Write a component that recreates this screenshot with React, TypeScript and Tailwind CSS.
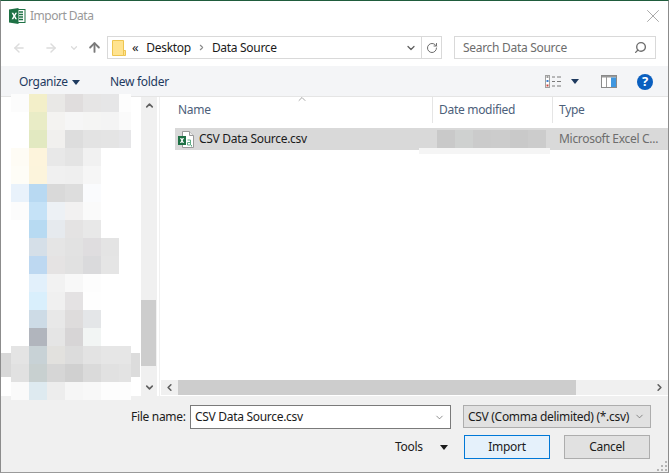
import { ChevronDown, ChevronLeft, ChevronRight, ChevronUp, RotateCw, Search, X, ArrowLeft, ArrowRight, ArrowUp } from "lucide-react";

// blurred navigation tree: one row of cells per 18px band
const treeRows: string[][] = [
  ["bg-[#fcfcfc]", "bg-[#f3efc9]", "bg-[#e9e8e6]", "bg-[#e0dddd]", "bg-[#e6e5e5]", "bg-[#e6e6e7]", "bg-[#fdfdfd]"],
  ["bg-white", "bg-[#e9ecc6]", "bg-[#f4f3f1]", "bg-[#f6f6f6]", "bg-[#f5f5f4]", "bg-[#f4f4f4]", "bg-[#fafafa]"],
  ["bg-white", "bg-[#e2e9c1]", "bg-[#f1f0ee]", "bg-[#dddddd]", "bg-[#e3e3e3]", "bg-[#e4e4e4]", "bg-[#e6e6e8]"],
  ["bg-[#fefcf5]", "bg-[#fdf4dc]", "bg-[#e8e8e8]", "bg-[#e4e4e4]", "bg-[#f1f1f1]", "bg-white", "bg-white"],
  ["bg-[#fefdf7]", "bg-[#fcf4dc]", "bg-[#f0f0f0]", "bg-[#efefef]", "bg-[#f6f6f6]", "bg-white", "bg-white"],
  ["bg-[#e9f2fb]", "bg-[#b8d9f2]", "bg-[#d9d9d9]", "bg-[#dddddd]", "bg-[#fafbfd]", "bg-white", "bg-white"],
  ["bg-[#fcfcfc]", "bg-[#c5e2f7]", "bg-[#edf1f5]", "bg-[#f2f1f1]", "bg-[#fafafa]", "bg-white", "bg-white"],
  ["bg-white", "bg-[#b7daf2]", "bg-[#e6eaee]", "bg-[#e4e3e3]", "bg-[#e8e8e8]", "bg-white", "bg-white"],
  ["bg-white", "bg-[#d5dfe8]", "bg-[#e5e5e5]", "bg-[#e2e2e2]", "bg-[#dfdddf]", "bg-[#e4e4e4]", "bg-white"],
  ["bg-white", "bg-[#bdd8f1]", "bg-[#e5e3e3]", "bg-[#e1e1e1]", "bg-[#dadadc]", "bg-[#e5e5e5]", "bg-white"],
  ["bg-white", "bg-[#e2f0fb]", "bg-[#f2f2f2]", "bg-[#f8f8f8]", "bg-[#fdfdfd]", "bg-white", "bg-white"],
  ["bg-white", "bg-[#d9effc]", "bg-[#f0f0f0]", "bg-[#e4e2e3]", "bg-[#fefefe]", "bg-white", "bg-white"],
  ["bg-white", "bg-[#cddbe6]", "bg-[#e8e8e8]", "bg-[#dedcdc]", "bg-[#e4e6e8]", "bg-white", "bg-white"],
  ["bg-white", "bg-[#b1b5bd]", "bg-[#e5e5e5]", "bg-[#d7d5d6]", "bg-[#f2f5f4]", "bg-white", "bg-white"],
  ["bg-[#e4e4e4]", "bg-[#c8d2d6]", "bg-[#e2e1de]", "bg-[#dcdcdc]", "bg-[#e3e3e3]", "bg-[#e6e6e6]", "bg-[#e6e6e6]"],
  ["bg-[#e1e1e1]", "bg-[#c8d0d0]", "bg-[#d6d6d6]", "bg-[#d0d0d0]", "bg-[#dadada]", "bg-[#e1e1e1]", "bg-[#e3e3e3]"],
  ["bg-[#fafafa]", "bg-[#deeaf0]", "bg-[#ededed]", "bg-[#f6f6f6]", "bg-[#f8f8f8]", "bg-[#fdfdfd]", "bg-[#fdfdfd]"],
];

const dateCells = ["bg-[#c9c9c9]", "bg-[#cfd1d0]", "bg-[#cbcbcb]", "bg-[#cccccc]", "bg-[#c9c9c9]", "bg-[#cccccc]"];

function ExcelLogo() {
  return (
    <svg width="17" height="16" viewBox="0 0 17 16" className="shrink-0">
      <rect x="5" y="1.5" width="11" height="13" fill="#fff" stroke="#1e7145" />
      <path d="M10 4h4M10 6.5h4M10 9h4M10 11.5h4" stroke="#1e7145" strokeWidth="1.4" />
      <path d="M0 1.5 9.5 0v16L0 14.5z" fill="#1e7145" />
      <path d="M2.6 4.8h1.7l1 2 1-2H8L6.2 8 8 11.2H6.3l-1-2-1 2H2.6L4.4 8z" fill="#fff" />
    </svg>
  );
}

function FolderIcon() {
  return (
    <svg width="14" height="16" viewBox="0 0 14 16" className="shrink-0">
      <path d="M.5.5h11v15H.5z" fill="#ffe38f" stroke="#eec550" />
      <path d="M11.5 10.5h2v5h-2z" fill="#ffe38f" stroke="#eec550" />
    </svg>
  );
}

function CsvIcon() {
  return (
    <svg width="16" height="17" viewBox="0 0 16 17" className="shrink-0">
      <path d="M4.5.5h7l4 4v12h-11z" fill="#fff" stroke="#9a9a9a" />
      <path d="M11.5.5v4h4" fill="#eee" stroke="#9a9a9a" />
      <rect x="0" y="5" width="8" height="9" fill="#1e7145" />
      <path d="M2 7h1.3l.7 1.3L4.7 7H6L4.7 9.5 6 12H4.7L4 10.7 3.3 12H2l1.3-2.5z" fill="#fff" />
      <path d="M9.5 9h3v5h-3v-2.5h3M13.5 14v1.5" fill="none" stroke="#5fae86" />
    </svg>
  );
}

function ViewIcon() {
  return (
    <svg width="17" height="13" viewBox="0 0 17 13">
      <rect x="0.5" y="0.5" width="4" height="12" fill="#fff" stroke="#a0a0a0" />
      <path d="M1.5 2h2" stroke="#3c3c3c" />
      <path d="M1.5 6h2" stroke="#3a7fd0" strokeWidth="2" />
      <path d="M1.5 10.5h2" stroke="#c8443c" strokeWidth="2" />
      <path d="M7 2h3M12 2h4M7 6.5h3M12 6.5h4M7 11h3M12 11h4" stroke="#7a7a7a" />
    </svg>
  );
}

function PaneIcon() {
  return (
    <svg width="16" height="13" viewBox="0 0 16 13">
      <rect x="0.5" y="0.5" width="15" height="12" fill="#fff" stroke="#8a8a8a" />
      <rect x="1" y="1" width="14" height="1.5" fill="#9a9a9a" />
      <rect x="5" y="1" width="1" height="11" fill="#9a9a9a" />
      <rect x="10" y="2.5" width="5" height="9.5" fill="#3f97e0" />
    </svg>
  );
}

function Caret({ className }: { className: string }) {
  return (
    <svg width="8" height="5" viewBox="0 0 8 5" className={className}>
      <path d="M0 0h8L4 5z" fill="currentColor" />
    </svg>
  );
}

function ResizeGrip() {
  return (
    <svg width="10" height="10" viewBox="0 0 10 10" className="absolute bottom-[1px] right-[1px]">
      <path d="M8 0h2v2H8zM4 4h2v2H4zM8 4h2v2H8zM0 8h2v2H0zM4 8h2v2H4zM8 8h2v2H8z" fill="#b5b5b5" />
    </svg>
  );
}

export default function App() {
  return (
    <div
      className="relative flex h-[473px] w-[669px] flex-col overflow-hidden border-x border-b border-t border-x-[#8c8c8c] border-b-[#9a9a9a] border-t-[#1f5c3c] bg-white text-[12px] tracking-[-0.3px] text-[#1b1b1b]"
      style={{ fontFamily: '"Noto Sans", "Open Sans", sans-serif' }}
    >
      {/* title bar */}
      <div className="flex h-[29px] shrink-0 items-center pl-[8px] pr-[4px]">
        <ExcelLogo />
        <span className="ml-[4px] mt-[1px] text-[12px] tracking-[-0.5px] text-[#999999]">Import Data</span>
        <X className="ml-auto size-[22px] text-[#8a8a8a]" strokeWidth={0.8} />
      </div>

      {/* address bar */}
      <div className="flex h-[36px] shrink-0 items-center pb-[1px] pl-[11px]">
        <ArrowLeft className="size-[14px] text-[#dcdcdc]" strokeWidth={2.5} />
        <ArrowRight className="ml-[18px] size-[14px] text-[#dcdcdc]" strokeWidth={2.5} />
        <ChevronDown className="ml-[11px] size-[10px] text-[#dcdcdc]" strokeWidth={3} />
        <ArrowUp className="ml-[8px] size-[15px] text-[#7a7a7a]" strokeWidth={3} />
        <div className="ml-[5px] flex h-[23px] w-[335px] items-center border border-[#d9d9d9] pl-[4px]">
          <FolderIcon />
          <span className="ml-[6px] text-[13px] leading-none">«</span>
          <span className="ml-[8px]">Desktop</span>
          <ChevronRight className="ml-[6px] size-[9px] text-[#8a8a8a]" strokeWidth={3} />
          <span className="ml-[6px]">Data Source</span>
          <ChevronDown className="ml-auto mr-[4px] size-[12px] text-[#5f5f5f]" strokeWidth={2.5} />
          <div className="flex h-full w-[20px] items-center justify-center border-l border-[#d9d9d9]">
            <RotateCw className="size-[12px] text-[#6d6d6d]" strokeWidth={2} />
          </div>
        </div>
        <div className="ml-[12px] flex h-[23px] w-[202px] items-center justify-between border border-[#d9d9d9] pl-[8px] pr-[8px] text-[#6d6d6d]">
          <span>Search Data Source</span>
          <Search className="size-[13px] -scale-x-100 text-[#6d6d6d]" strokeWidth={2.5} />
        </div>
      </div>

      {/* toolbar */}
      <div className="flex h-[31px] shrink-0 items-center border-b border-[#e5e5e5] bg-[#f4f5f7] pl-[18px] pt-[1px] text-[#1e3a5f]">
        <span className="w-[48px]">Organize</span>
        <Caret className="ml-[5px] mt-[1px] text-[#1e3a5f]" />
        <span className="ml-[30px]">New folder</span>
        <div className="ml-auto flex items-center pr-[15px]">
          <ViewIcon />
          <Caret className="ml-[9px] text-[#1e3a5f]" />
          <div className="ml-[22px]"><PaneIcon /></div>
          <div className="ml-[20px] flex size-[16px] items-center justify-center rounded-full bg-[#0a5fbf] text-[13px] font-bold leading-none text-white">?</div>
        </div>
      </div>

      {/* main split */}
      <div className="flex min-h-0 flex-1">
        <aside className="relative z-10 flex w-[159px] shrink-0 border-r border-[#f0f0f0]">
          {/* tree cells run a little past the panel, as in the source capture */}
          <div className="-mt-[3px] h-[306px] w-[140px] shrink-0 pl-[10px]">
            {treeRows.map((cells, i) => (
              <div key={i} className="grid h-[18px] grid-cols-[18px_18px_18px_18px_18px_18px_12px]">
                {cells.map((cell, j) => (
                  <div key={j} className={cell} />
                ))}
              </div>
            ))}
          </div>
          {/* tree scrollbar */}
          <div className="flex w-[16px] shrink-0 flex-col bg-[#f0f0f0]">
            <div className="flex h-[17px] items-center justify-center">
              <ChevronUp className="size-[11px] text-[#606060]" strokeWidth={3.5} />
            </div>
            <div className="mt-[186px] h-[66px] w-[15px] bg-[#cdcdcd]" />
            <div className="mt-auto flex h-[17px] items-center justify-center">
              <ChevronDown className="size-[11px] text-[#606060]" strokeWidth={3.5} />
            </div>
          </div>
          <div className="absolute left-0 top-[256px] h-[24px] w-[10px] bg-[#d8d8d8]" />
          <div className="absolute left-[130px] top-[256px] h-[24px] w-[9px] bg-[#dcdcdc]" />
        </aside>

        <section className="relative flex min-w-0 flex-1 flex-col">
          {/* column header */}
          <div className="relative flex h-[26px] shrink-0 text-[#4c607a]">
            <div className="flex w-[272px] items-center pl-[18px]">Name</div>
            <div className="flex w-[120px] items-center border-l border-[#e5e5e5] pl-[6px]">Date modified</div>
            <div className="flex items-center border-l border-[#e5e5e5] pl-[6px]">Type</div>
            <ChevronUp className="absolute left-[136px] top-[-4px] size-[12px] text-[#8a8a8a]" strokeWidth={1.5} />
          </div>
          {/* file row */}
          <div className="relative ml-[15px] mt-[5px] flex h-[22px] shrink-0 items-center bg-[#d9d9d9]">
            <div className="ml-[3px] flex w-[259px] items-center">
              <CsvIcon />
              <span className="ml-[5px]">CSV Data Source.csv</span>
            </div>
            <div className="mt-[2px] grid h-[18px] w-[109px] self-start grid-cols-6">
              {dateCells.map((cell, i) => (
                <div key={i} className={cell} />
              ))}
            </div>
            <span className="ml-[13px] text-[#6d6d6d]">Microsoft Excel C...</span>
          </div>
          <div className="relative z-10 -mt-[2px] ml-[259px] h-[6px] w-[131px] shrink-0 bg-[#f5f5f5]" />
          {/* file list scrollbar */}
          <div className="mb-[1px] ml-[1px] mt-auto flex h-[15px] shrink-0 items-center bg-[#f0f0f0]">
            <div className="flex w-[17px] justify-center">
              <ChevronLeft className="size-[11px] text-[#606060]" strokeWidth={3.5} />
            </div>
            <div className="h-full w-[398px] bg-[#cdcdcd]" />
            <div className="ml-auto flex w-[17px] justify-center">
              <ChevronRight className="size-[11px] text-[#606060]" strokeWidth={3.5} />
            </div>
          </div>
        </section>
      </div>

      {/* footer */}
      <div className="relative h-[76px] shrink-0 bg-[#f0f0f0]">
        <div className="flex items-start pl-[130px] pt-[9px]">
          <span className="mt-[3px] w-[59px] whitespace-nowrap">File name:</span>
          <div className="flex h-[24px] w-[261px] items-center justify-between border border-[#7a7a7a] bg-white pl-[4px] pr-[5px]">
            <span>CSV Data Source.csv</span>
            <ChevronDown className="size-[11px] text-[#5f5f5f]" strokeWidth={1.5} />
          </div>
          <div className="ml-[12px] flex h-[23px] w-[188px] items-center justify-between whitespace-nowrap border border-[#adadad] bg-[#e1e1e1] pl-[4px] pr-[5px]">
            <span>CSV (Comma delimited) (*.csv)</span>
            <ChevronDown className="size-[11px] text-[#5f5f5f]" strokeWidth={1.5} />
          </div>
        </div>
        <div className="mt-[6px] flex items-center pl-[394px]">
          <span className="w-[45px]">Tools</span>
          <Caret className="text-[#1b1b1b]" />
          <button className="ml-[16px] h-[24px] w-[86px] border border-[#0078d7] bg-[#e5f1fb]">Import</button>
          <button className="ml-[14px] h-[24px] w-[86px] border border-[#adadad] bg-[#e1e1e1]">Cancel</button>
        </div>
        <ResizeGrip />
      </div>
    </div>
  );
}
